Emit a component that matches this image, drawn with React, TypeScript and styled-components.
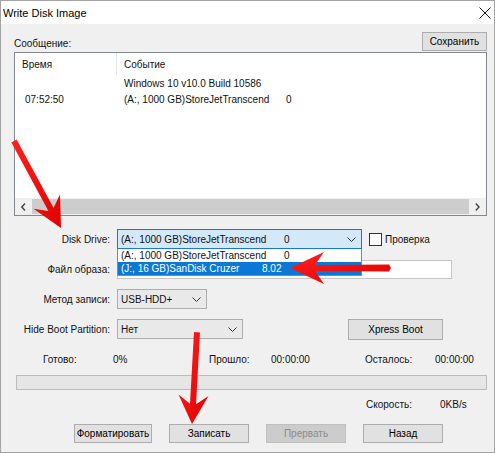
import React from "react";
import styled, { createGlobalStyle } from "styled-components";

const GlobalStyle = createGlobalStyle`
  html, body { margin: 0; padding: 0; background: #ffffff; }
  body { font-family: "Liberation Sans", Arial, sans-serif; font-size: 10px; color: #111; }
  * { box-sizing: border-box; }
`;

const Window = styled.div`
  position: relative;
  width: 495px;
  height: 453px;
  border: 1px solid #a3a3a3;
  display: flex;
  flex-direction: column;
  overflow: hidden;
  background: #f0f0f0;
`;

const TitleBar = styled.div`
  height: 23px;
  flex: none;
  background: #ffffff;
  display: flex;
  align-items: center;
  justify-content: space-between;
  padding: 0 3px 0 2px;
`;

const Title = styled.span`
  font-size: 11px;
  color: #000;
`;

const Body = styled.div`
  flex: 1;
  display: flex;
  flex-direction: column;
  padding: 8px 7px 0 13px;
`;

const MessageHeader = styled.div`
  height: 20px;
  display: flex;
  justify-content: space-between;
  align-items: flex-start;
`;

const SectionLabel = styled.span`
  align-self: flex-end;
  padding-bottom: 3px;
`;

const Button = styled.button<{ $width: number; $height?: number }>`
  width: ${(p) => p.$width}px;
  height: ${(p) => p.$height ?? 19}px;
  margin: 0;
  padding: 0;
  font-family: inherit;
  font-size: 10px;
  color: #000;
  background: #e1e1e1;
  border: 1px solid #adadad;
  &:disabled {
    background: #cccccc;
    border-color: #bfbfbf;
    color: #8a8a8a;
  }
`;

const ListBox = styled.div`
  height: 164px;
  border: 1px solid #828790;
  background: #ffffff;
  display: flex;
  flex-direction: column;
`;

const ListHeader = styled.div`
  height: 22px;
  display: flex;
  align-items: center;
`;

const HeaderCell = styled.div<{ $width?: number; $sep?: boolean }>`
  ${(p) => (p.$width ? `width: ${p.$width}px;` : "flex: 1;")}
  height: 100%;
  display: flex;
  align-items: center;
  padding-left: 7px;
  border-right: ${(p) => (p.$sep ? "1px solid #e5e5e5" : "none")};
`;

const ListRow = styled.div`
  height: 16px;
  display: flex;
  align-items: center;
`;

const Cell = styled.div<{ $width?: number; $pad: number }>`
  ${(p) => (p.$width ? `width: ${p.$width}px;` : "flex: 1;")}
  padding-left: ${(p) => p.$pad}px;
  display: flex;
  white-space: nowrap;
`;

const Col = styled.span<{ $width: number }>`
  display: inline-block;
  width: ${(p) => p.$width}px;
  flex: none;
`;

const ListFill = styled.div`
  flex: 1;
`;

const HScroll = styled.div`
  height: 17px;
  display: flex;
  background: #f0f0f0;
`;

const ScrollButton = styled.div`
  width: 17px;
  display: flex;
  align-items: center;
  justify-content: center;
`;

const ScrollTrack = styled.div`
  flex: 1;
  padding: 1px 0;
  display: flex;
`;

const ScrollThumb = styled.div`
  flex: 1;
  background: #cdcdcd;
`;

const Form = styled.div`
  margin-top: 13px;
  display: grid;
  grid-template-columns: 96px 1fr;
  column-gap: 7px;
  row-gap: 10px;
  grid-auto-rows: 20px;
`;

const FieldLabel = styled.div`
  text-align: right;
  align-self: center;
  white-space: nowrap;
`;

const FieldLine = styled.div`
  display: flex;
  align-items: center;
`;

const ComboWrap = styled.div`
  position: relative;
  height: 20px;
`;

const Combo = styled.div<{ $width: number; $open?: boolean }>`
  width: ${(p) => p.$width}px;
  height: 20px;
  display: flex;
  align-items: center;
  padding: 0 5px 0 3px;
  white-space: nowrap;
  background: ${(p) => (p.$open ? "#d3e8f9" : "#e9e9e9")};
  border: 1px solid ${(p) => (p.$open ? "#1b78d0" : "#adadad")};
`;

const ComboText = styled.span`
  flex: 1;
  display: flex;
`;

const Dropdown = styled.div`
  position: absolute;
  left: 0;
  top: 100%;
  width: 100%;
  z-index: 2;
  background: #ffffff;
  border: 1px solid #7a8ea3;
  border-top: none;
`;

const DropItem = styled.div<{ $selected?: boolean }>`
  height: 13px;
  line-height: 13px;
  padding-left: 3px;
  display: flex;
  white-space: nowrap;
  background: ${(p) => (p.$selected ? "#0a78d6" : "transparent")};
  color: ${(p) => (p.$selected ? "#ffffff" : "#111")};
`;

const CheckBox = styled.span`
  width: 13px;
  height: 13px;
  margin-left: 7px;
  background: #ffffff;
  border: 1px solid #333;
`;

const CheckLabel = styled.span`
  margin-left: 3px;
`;

const TextField = styled.div<{ $width: number }>`
  width: ${(p) => p.$width}px;
  height: 19px;
  background: #ffffff;
  border: 1px solid #c6c6c6;
`;

const XpressButton = styled(Button)`
  margin-left: 105px;
`;

const StatusGrid = styled.div`
  margin-top: 13px;
  height: 14px;
  padding-left: 29px;
  display: grid;
  grid-template-columns: 70px 96px 62px 94px 70px auto;
  align-items: center;
`;

const ProgressBar = styled.div`
  margin: 9px 0 0 2px;
  height: 15px;
  background: #e6e6e6;
  border: 1px solid #bcbcbc;
`;

const SpeedRow = styled.div`
  margin-top: 7px;
  height: 14px;
  padding-left: 352px;
  display: grid;
  grid-template-columns: 74px auto;
  align-items: center;
`;

const ButtonRow = styled.div`
  margin-top: 13px;
  padding-left: 60px;
  display: flex;
  gap: 17px;
`;

const Overlay = styled.svg`
  position: absolute;
  left: -1px;
  top: -1px;
  pointer-events: none;
  z-index: 5;
`;

const Chevron = ({ dir }: { dir: "down" | "left" | "right" }) => {
  if (dir === "down")
    return (
      <svg width="9" height="5" viewBox="0 0 9 5">
        <polyline points="0.5,0.5 4.5,4.5 8.5,0.5" fill="none" stroke="#333" strokeWidth="1" />
      </svg>
    );
  const pts = dir === "left" ? "4,0.5 0.8,4 4,7.5" : "0.8,0.5 4,4 0.8,7.5";
  return (
    <svg width="5" height="8" viewBox="0 0 5 8">
      <polyline points={pts} fill="none" stroke="#444" strokeWidth="1.4" />
    </svg>
  );
};

const CloseIcon = () => (
  <svg width="12" height="12" viewBox="0 0 12 12">
    <path d="M0.5 0.5 L11.5 11.5 M11.5 0.5 L0.5 11.5" stroke="#111" strokeWidth="1" />
  </svg>
);

const Arrows = () => (
  <Overlay width="495" height="453" viewBox="0 0 495 453">
    <defs>
      <linearGradient id="red" x1="0" y1="0" x2="1" y2="1">
        <stop offset="0" stopColor="#ff2020" />
        <stop offset="1" stopColor="#e00000" />
      </linearGradient>
    </defs>
    <polygon
      fill="url(#red)"
      points="61,228 60,194.5 53.6,208.1 16.6,139.6 11.4,142.4 48.4,210.9 33.5,208.7"
    />
    <polygon
      fill="url(#red)"
      points="290,268 324,252 315,265 389,264.5 391,268 389,271.5 315,271 324,284"
    />
    <polygon
      fill="url(#red)"
      points="192,424 208.5,396 196,404.2 200,332.5 194,332 190,403.8 178.5,394.5"
    />
  </Overlay>
);

export default function App() {
  return (
    <>
      <GlobalStyle />
      <Window>
        <TitleBar>
          <Title>Write Disk Image</Title>
          <CloseIcon />
        </TitleBar>
        <Body>
          <MessageHeader>
            <SectionLabel>Сообщение:</SectionLabel>
            <Button $width={65}>Сохранить</Button>
          </MessageHeader>
          <ListBox>
            <ListHeader>
              <HeaderCell $width={102} $sep>Время</HeaderCell>
              <HeaderCell>Событие</HeaderCell>
            </ListHeader>
            <ListRow>
              <Cell $width={102} $pad={10} />
              <Cell $pad={7}>Windows 10 v10.0 Build 10586</Cell>
            </ListRow>
            <ListRow>
              <Cell $width={102} $pad={10}>07:52:50</Cell>
              <Cell $pad={7}>
                <Col $width={162}>(A:, 1000 GB)StoreJetTranscend</Col>
                <span>0</span>
              </Cell>
            </ListRow>
            <ListFill />
            <HScroll>
              <ScrollButton>
                <Chevron dir="left" />
              </ScrollButton>
              <ScrollTrack>
                <ScrollThumb />
              </ScrollTrack>
              <ScrollButton>
                <Chevron dir="right" />
              </ScrollButton>
            </HScroll>
          </ListBox>

          <Form>
            <FieldLabel>Disk Drive:</FieldLabel>
            <FieldLine>
              <ComboWrap>
                <Combo $width={245} $open>
                  <ComboText>
                    <Col $width={163}>(A:, 1000 GB)StoreJetTranscend</Col>
                    <span>0</span>
                  </ComboText>
                  <Chevron dir="down" />
                </Combo>
                <Dropdown>
                  <DropItem>
                    <Col $width={163}>(A:, 1000 GB)StoreJetTranscend</Col>
                    <span>0</span>
                  </DropItem>
                  <DropItem $selected>
                    <Col $width={141}>(J:, 16 GB)SanDisk Cruzer</Col>
                    <span>8.02</span>
                  </DropItem>
                </Dropdown>
              </ComboWrap>
              <CheckBox />
              <CheckLabel>Проверка</CheckLabel>
            </FieldLine>

            <FieldLabel>Файл образа:</FieldLabel>
            <FieldLine>
              <TextField $width={335} />
            </FieldLine>

            <FieldLabel>Метод записи:</FieldLabel>
            <FieldLine>
              <Combo $width={90}>
                <ComboText>USB-HDD+</ComboText>
                <Chevron dir="down" />
              </Combo>
            </FieldLine>

            <FieldLabel>Hide Boot Partition:</FieldLabel>
            <FieldLine>
              <Combo $width={126}>
                <ComboText>Нет</ComboText>
                <Chevron dir="down" />
              </Combo>
              <XpressButton $width={95} $height={21}>Xpress Boot</XpressButton>
            </FieldLine>
          </Form>

          <StatusGrid>
            <span>Готово:</span>
            <span>0%</span>
            <span>Прошло:</span>
            <span>00:00:00</span>
            <span>Осталось:</span>
            <span>00:00:00</span>
          </StatusGrid>

          <ProgressBar />

          <SpeedRow>
            <span>Скорость:</span>
            <span>0KB/s</span>
          </SpeedRow>

          <ButtonRow>
            <Button $width={78}>Форматировать</Button>
            <Button $width={80}>Записать</Button>
            <Button $width={80} disabled>
              Прервать
            </Button>
            <Button $width={80}>Назад</Button>
          </ButtonRow>
        </Body>
        <Arrows />
      </Window>
    </>
  );
}
